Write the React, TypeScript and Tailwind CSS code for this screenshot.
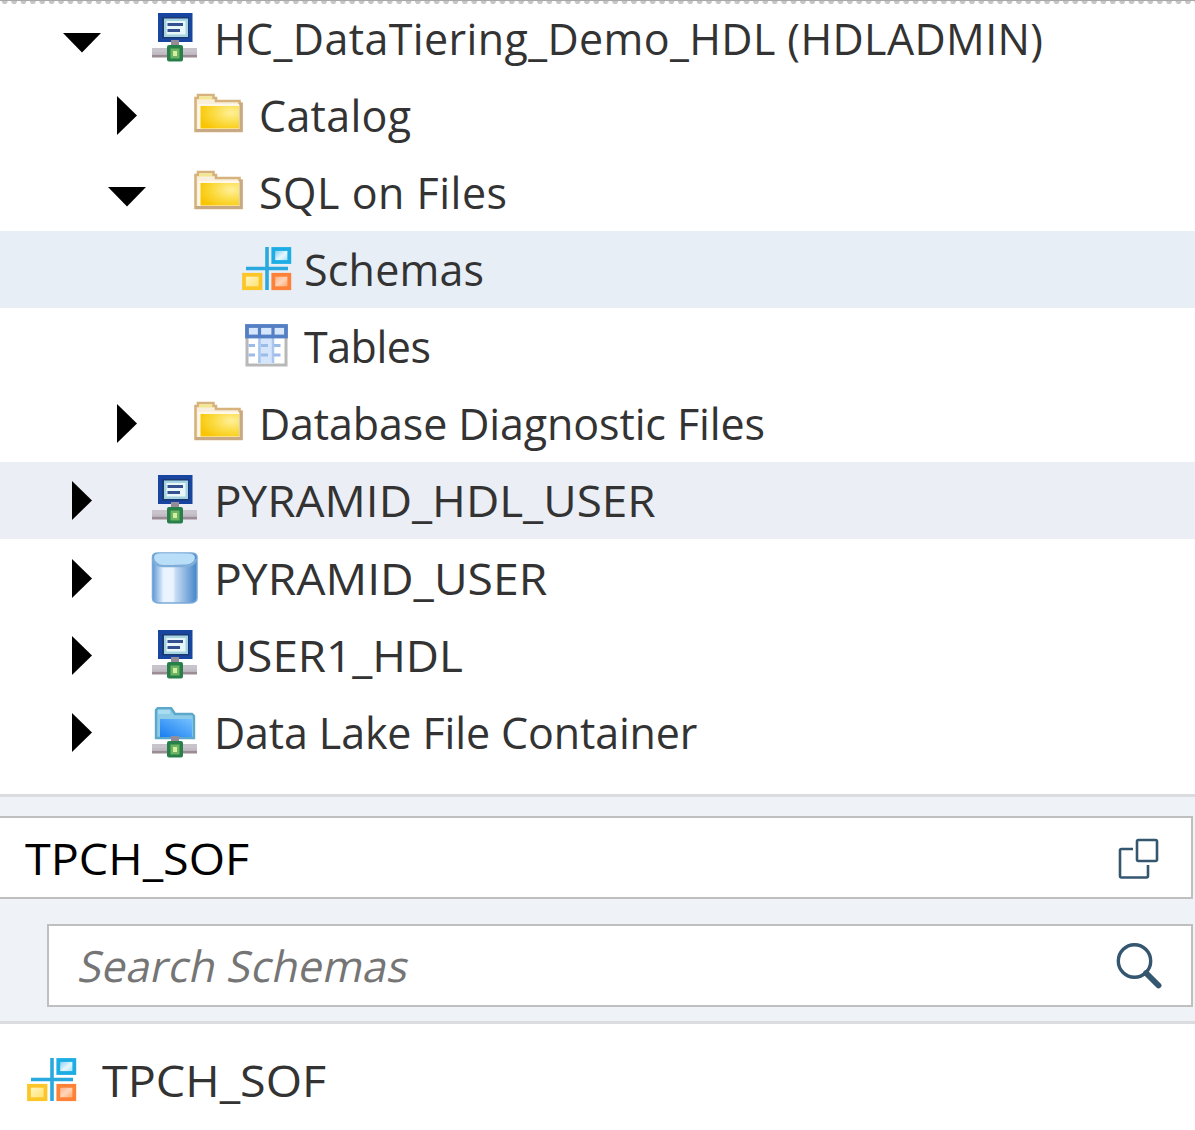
import type { ReactNode } from "react";

function SchemaIcon() {
  return (
    <svg width="50" height="44" viewBox="0 0 50 44" className="shrink-0">
      <defs>
        <linearGradient id="sb" x1="0" y1="0" x2="1" y2="1">
          <stop offset="0" stopColor="#6cc4ea" />
          <stop offset=".55" stopColor="#e6f7ff" />
          <stop offset="1" stopColor="#8ed6f4" />
        </linearGradient>
        <linearGradient id="so" x1="0" y1="0" x2="1" y2="1">
          <stop offset="0" stopColor="#ffa775" />
          <stop offset=".5" stopColor="#ffd5ba" />
          <stop offset="1" stopColor="#ff9a55" />
        </linearGradient>
        <linearGradient id="sy" x1="0" y1="0" x2="1" y2="1">
          <stop offset="0" stopColor="#fff9cf" />
          <stop offset="1" stopColor="#ffe066" />
        </linearGradient>
      </defs>
      <path d="M25 0V43M4 21.5H46" stroke="#2aa9de" strokeWidth="3.6" />
      <rect x="31.300" y="2" width="16" height="13" fill="url(#sb)" stroke="#1cade4" strokeWidth="3.8" />
      <rect x="31.300" y="27.800" width="16" height="13.400" fill="url(#so)" stroke="#fd8237" strokeWidth="3.8" />
      <rect x="2" y="27.800" width="16.500" height="13.400" fill="url(#sy)" stroke="#fcc628" strokeWidth="3.8" />
    </svg>
  );
}

function FolderIcon() {
  return (
    <svg width="50" height="40" viewBox="0 0 50 40" className="shrink-0">
      <defs>
        <radialGradient id="fy" cx=".8" cy=".3" r=".9">
          <stop offset="0" stopColor="#fff09a" />
          <stop offset=".5" stopColor="#fbdc45" />
          <stop offset="1" stopColor="#f9c400" />
        </radialGradient>
      </defs>
      <path d="M1.500 38V5H4V2H19.500V5H22V8H45.500V10.500H47.500V38Z" fill="#f9efdc" stroke="#d6b27c" strokeWidth="2.600" />
      <path d="M5 5H18" stroke="#f4e791" strokeWidth="3" />
      <path d="M47 10V37.500H1.500" fill="none" stroke="#c8a984" strokeWidth="3" />
      <rect x="4" y="11" width="41" height="25" fill="#fff8e8" />
      <rect x="6.500" y="13" width="38.500" height="22.500" fill="url(#fy)" />
    </svg>
  );
}

function NetworkBase() {
  return (
    <>
      <rect x="1" y="35" width="45" height="4" fill="#c9c3cc" />
      <rect x="1" y="39" width="45" height="2.500" fill="#c2bcc6" />
      <rect x="1" y="41.500" width="45" height="3" fill="#9b8c95" />
      <rect x="20" y="27" width="8" height="6" fill="#968c98" />
      <rect x="16" y="32" width="16" height="16.500" rx="2" fill="#27804a" />
      <rect x="19.500" y="35.500" width="9" height="10" fill="#6fb463" />
      <rect x="22" y="38" width="4" height="5" fill="#d3ef9f" />
    </>
  );
}

function ServerIcon() {
  return (
    <svg width="48" height="50" viewBox="0 0 48 50" className="shrink-0">
      <rect x="7" y="0" width="34.500" height="29" fill="#1845a0" />
      <rect x="11" y="4" width="27" height="21.500" fill="#1c3873" />
      <rect x="13" y="5.500" width="24" height="18.500" fill="#a5d3df" />
      <rect x="15.500" y="8" width="19" height="13.500" fill="#e9f7fb" />
      <path d="M16.500 11.500H32M16.500 17.500H29" stroke="#35508e" strokeWidth="3" />
      <NetworkBase />
    </svg>
  );
}

function ContainerIcon() {
  return (
    <svg width="48" height="51" viewBox="0 0 48 51" className="shrink-0">
      <defs>
        <linearGradient id="cb" x1="0" y1="1" x2="1" y2="0">
          <stop offset="0" stopColor="#1a7df0" />
          <stop offset="1" stopColor="#74c1ff" />
        </linearGradient>
      </defs>
      <path d="M5 31V3L7 1H20L24 7H41L43 9V31Z" fill="#8dcbe6" stroke="#5ba8ca" strokeWidth="2.400" />
      <path d="M7 5H19" stroke="#a8dcf0" strokeWidth="4" />
      <rect x="9" y="12" width="32" height="18" fill="url(#cb)" />
      <g transform="translate(0 2)"><NetworkBase /></g>
    </svg>
  );
}

function DatabaseIcon() {
  return (
    <svg width="48" height="52" viewBox="0 0 48 52" className="shrink-0">
      <defs>
        <linearGradient id="db" x1="0" x2="1">
          <stop offset="0" stopColor="#5f97d3" />
          <stop offset=".14" stopColor="#a9cbec" />
          <stop offset=".25" stopColor="#eaf4ff" />
          <stop offset=".46" stopColor="#ebf4fe" />
          <stop offset=".52" stopColor="#c6dcf2" />
          <stop offset=".82" stopColor="#75a6d9" />
          <stop offset="1" stopColor="#4384c8" />
        </linearGradient>
      </defs>
      <path d="M1.500 5Q1.500 1 7 1H40Q46 1 46 5V46Q46 51 38 51H9Q1.500 51 1.500 46Z" fill="url(#db)" stroke="#7aa9d8" strokeWidth="1.500" />
      <path d="M3 5Q4 1.500 9 1.500H38Q43 1.500 44 5Q44 11 36 12.500H11Q3 11 3 5Z" fill="#b9def8" />
      <path d="M2 7Q4 14 12 14H35Q43 14 45 7" fill="none" stroke="#7fafd9" strokeWidth="2.500" />
    </svg>
  );
}

function TableIcon() {
  return (
    <svg width="44" height="44" viewBox="0 0 44 44" className="shrink-0">
      <rect x="3" y="2" width="39" height="39" fill="#fff" stroke="#b8b8b8" strokeWidth="3" />
      <rect x="14" y="12" width="15" height="27.500" fill="#d5e5fb" />
      <path d="M15.500 12V39M29 12V39" stroke="#a9c6ef" strokeWidth="2.500" />
      <rect x="3" y="2" width="39" height="10.500" fill="#d6e6fb" stroke="#557fc4" strokeWidth="3.800" />
      <path d="M15.500 1V13M29 1V13" stroke="#557fc4" strokeWidth="3.200" />
      <path d="M4.500 21.500H11M17 21.500H24M30 21.500H36.500M4.500 31H11M17 31H24M30 31H36.500" stroke="#9dbbe8" strokeWidth="3.200" />
    </svg>
  );
}

function DuplicateIcon() {
  return (
    <svg width="41" height="42" viewBox="0 0 41 42" fill="none" stroke="#34566f" strokeWidth="2.600">
      <rect x="19" y="2" width="20" height="21" rx="1.500" />
      <path d="M15 11H3.500Q2 11 2 12.500V38Q2 39.500 3.500 39.500H28.500Q30 39.500 30 38V27" />
    </svg>
  );
}

function SearchIcon() {
  return (
    <svg width="46" height="47" viewBox="0 0 46 47" fill="none" stroke="#34566f">
      <circle cx="18.500" cy="19" r="16.200" strokeWidth="3.400" />
      <path d="M30 31L42.500 43.500" strokeWidth="5.800" strokeLinecap="round" />
    </svg>
  );
}

function Arrow({ open }: { open?: boolean }) {
  return open ? (
    <svg width="40" height="20" viewBox="0 0 40 20" className="mt-[8px] ml-px"><path d="M1 0H39L20 19.500Z" /></svg>
  ) : (
    <svg width="20" height="39" viewBox="0 0 20 39" className="ml-[11px]"><path d="M0 0L20 19.500L0 39Z" /></svg>
  );
}

type RowProps = {
  label: string;
  icon: ReactNode;
  arrow?: "open" | "closed";
  indent: string;
  arrowBox: string;
  iconBox: string;
  text: string;
  tone?: string;
};

const root = { indent: "pl-[61px]", arrowBox: "w-[90px]", iconBox: "w-[63px] pb-px" };
const folder = { indent: "pl-[106px]", arrowBox: "w-[88px]", iconBox: "w-[65px] pb-[5px]" };

const rows: RowProps[] = [
  { ...root, label: "HC_DataTiering_Demo_HDL (HDLADMIN)", icon: <ServerIcon />, arrow: "open", text: "tracking-[0.39px]" },
  { ...folder, label: "Catalog", icon: <FolderIcon />, arrow: "closed", text: "tracking-[0.3px]" },
  { ...folder, label: "SQL on Files", icon: <FolderIcon />, arrow: "open", text: "tracking-[0.5px]" },
  { label: "Schemas", icon: <SchemaIcon />, indent: "pl-[242px]", arrowBox: "w-0", iconBox: "w-[62px] pb-px", text: "tracking-[0.2px]", tone: "bg-[#e7eef6]" },
  { label: "Tables", icon: <TableIcon />, indent: "pl-[244px]", arrowBox: "w-0", iconBox: "w-[60px] pb-px", text: "tracking-[-0.5px]" },
  { ...folder, label: "Database Diagnostic Files", icon: <FolderIcon />, arrow: "closed", text: "tracking-[-0.12px]" },
  { ...root, label: "PYRAMID_HDL_USER", icon: <ServerIcon />, arrow: "closed", text: "origin-left scale-x-[1.067]", tone: "bg-[#ebeef4]" },
  { ...root, label: "PYRAMID_USER", icon: <DatabaseIcon />, arrow: "closed", text: "origin-left scale-x-[1.076]", tone: "pt-px" },
  { ...root, label: "USER1_HDL", icon: <ServerIcon />, arrow: "closed", text: "origin-left scale-x-[1.063]", tone: "pt-[2px]" },
  { ...root, label: "Data Lake File Container", icon: <ContainerIcon />, arrow: "closed", text: "tracking-[-0.13px]", tone: "pt-[2px]" },
];

export default function App() {
  return (
    <div className="relative flex h-[1130px] w-[1195px] flex-col overflow-hidden bg-white font-['Open_Sans',sans-serif] text-[43px] leading-none text-[#333]">
      <div className="absolute inset-x-0 top-0 h-[4px] border-t border-[#a8a8a8] bg-[radial-gradient(circle_at_50%_0.5px,#c6c6c6_2.4px,transparent_3px)] bg-[length:9.4px_4px]" />
      <div className="h-[794px] shrink-0">
        {rows.map((r) => (
          <div key={r.label} className={`flex h-[77px] items-center ${r.indent} ${r.tone ?? ""}`}>
            <span className={`flex shrink-0 justify-start ${r.arrowBox}`}>{r.arrow && <Arrow open={r.arrow === "open"} />}</span>
            <span className={`shrink-0 ${r.iconBox}`}>{r.icon}</span>
            <span className={`whitespace-nowrap ${r.text}`}>{r.label}</span>
          </div>
        ))}
      </div>
      <div className="flex h-[230px] shrink-0 flex-col border-t-[3px] border-b-[3px] border-[#dadcdf] bg-[#eff3f8] pt-[19px] pr-[2px]">
        <div className="flex h-[83px] shrink-0 items-center justify-between border-2 border-l-0 border-[#bfbfbf] bg-white pt-[2px] pr-[32px] pl-[25px] text-black">
          <span className="origin-left scale-x-[1.086]">TPCH_SOF</span>
          <DuplicateIcon />
        </div>
        <div className="mt-[25px] ml-[47px] flex h-[83px] shrink-0 items-center justify-between border-2 border-[#bfbfbf] bg-white pr-[29px] pb-px pl-[31px] text-[#757575]">
          <span className="-skew-x-12 whitespace-nowrap tracking-[0.25px]">Search Schemas</span>
          <span className="pt-px"><SearchIcon /></span>
        </div>
      </div>
      <div className="flex h-[106px] items-center pt-[6px] pl-[27px]">
        <span className="w-[75px] shrink-0"><SchemaIcon /></span>
        <span className="origin-left scale-x-[1.086]">TPCH_SOF</span>
      </div>
    </div>
  );
}
